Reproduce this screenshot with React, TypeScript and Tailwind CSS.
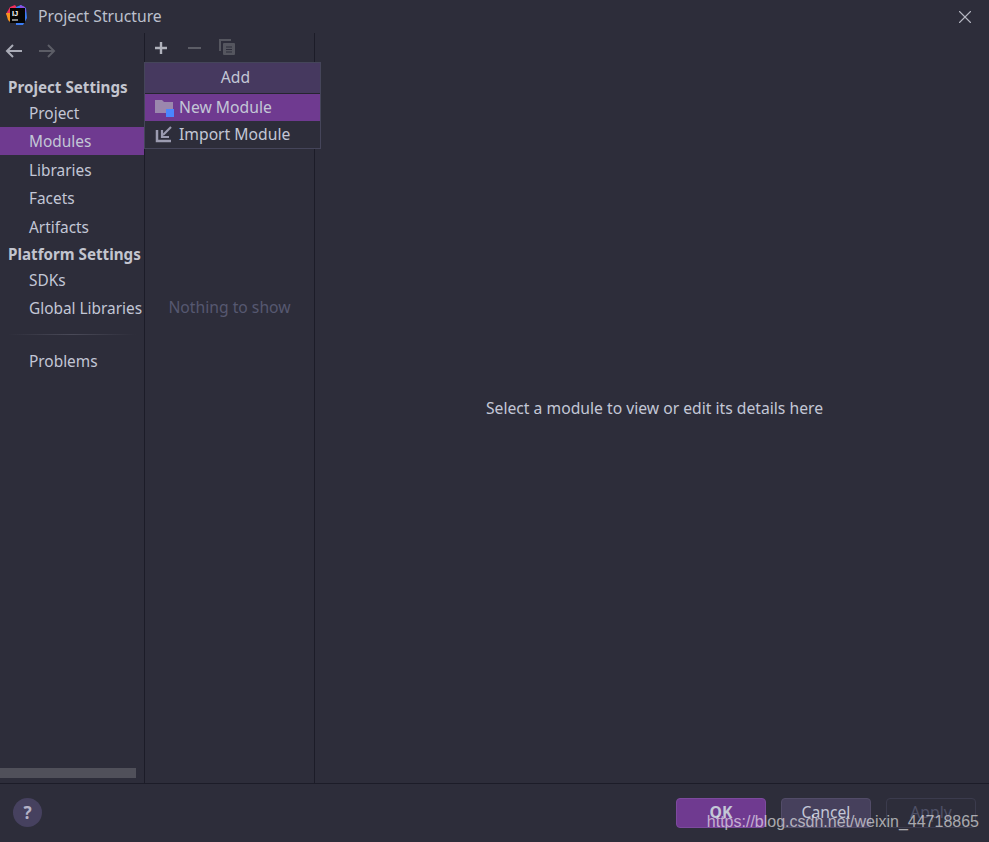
import React from 'react';
import { X } from 'lucide-react';

const ideFont = { fontFamily: '"Noto Sans", "Open Sans", sans-serif' };

const Logo = () => (
  <svg width="21" height="21" viewBox="0 0 21 21">
    <path d="M0 9 L4 2 L9 0 L12 4 L6 12 L3 14 Z" fill="#ef2f5e" />
    <path d="M0 8 L4 8 L4 17 L2 15 Z" fill="#f7941e" />
    <path d="M10 2 L15 0 L20 3 L21 13 L17 20 L10 20 Z" fill="#3a7cf5" />
    <path d="M14 0 L19 2 L20 7 L14 5 Z" fill="#8e4fe0" />
    <rect x="4" y="3" width="15" height="15" fill="#050505" />
    <text x="6" y="11" fontSize="7.5" fontWeight="700" fill="#fff" fontFamily="Liberation Sans, sans-serif">IJ</text>
    <rect x="6" y="14.5" width="6" height="1" fill="#fff" />
  </svg>
);

const SideItem = ({ label, active, h }: { label: string; active?: boolean; h: string }) => (
  <div className={`flex items-center pl-[29px] text-[15.4px] text-[#c3c7d6] whitespace-nowrap ${h} ${active ? 'bg-[#6f3a90]' : ''}`}>
    {label}
  </div>
);

const SideHeader = ({ label, h }: { label: string; h: string }) => (
  <div className={`flex items-center pl-2 text-[15.2px] font-bold text-[#c3c5cf] whitespace-nowrap ${h}`}>{label}</div>
);

const FooterButton = ({ label, cls }: { label: string; cls: string }) => (
  <button className={`w-[90px] h-[30px] pt-[1px] rounded-[4px] border text-[15.7px] ${cls}`}>{label}</button>
);

export default function App() {
  return (
    <div className="relative w-[989px] h-[842px] overflow-hidden flex flex-col bg-[#2d2d3a]" style={ideFont}>
      {/* title bar */}
      <div className="h-[33px] flex items-center shrink-0">
        <div className="ml-[6px] mr-[11px] w-[21px] h-[21px] -mt-[3px]"><Logo /></div>
        <span className="text-[15.7px] text-[#bcc0cd]">Project Structure</span>
        <X className="ml-auto mr-[13px] text-[#b5b7c2]" size={22} strokeWidth={1.2} />
      </div>

      <div className="flex h-[750px] shrink-0">
        {/* left nav */}
        <div className="w-[144px] flex flex-col relative shrink-0">
          <div className="h-[34px] flex items-center pl-[5px] pt-[2px] gap-[15px] shrink-0">
            <svg width="18" height="14" viewBox="0 0 18 14" fill="none" stroke="#a9abb6" strokeWidth="2">
              <path d="M17 7H2M8 1L2 7l6 6" />
            </svg>
            <svg width="18" height="14" viewBox="0 0 18 14" fill="none" stroke="#5c5d66" strokeWidth="2">
              <path d="M1 7h15M10 1l6 6-6 6" />
            </svg>
          </div>
          <SideHeader label="Project Settings" h="h-[26px] mt-[7px]" />
          <SideItem label="Project" h="h-[26px] pt-[2px]" />
          <SideItem label="Modules" active h="h-[28px] mt-[1px] pt-[2px]" />
          <SideItem label="Libraries" h="h-[28px] mt-[2px]" />
          <SideItem label="Facets" h="h-[28px]" />
          <SideItem label="Artifacts" h="h-[28px] mt-[1px]" />
          <SideHeader label="Platform Settings" h="h-[26px] -mt-[1px]" />
          <SideItem label="SDKs" h="h-[28px]" />
          <SideItem label="Global Libraries" h="h-[28px]" />
          <div className="mx-[8px] mt-[11px] h-px bg-gradient-to-r from-transparent via-[#4a4a58] to-transparent" />
          <SideItem label="Problems" h="h-[28px] mt-[13px]" />
          <div className="mt-auto mb-[5px] w-[136px] h-[10px] bg-[#50505a]" />
        </div>

        {/* module list */}
        <div className="w-[171px] shrink-0 border-x border-[#1c1c28] flex flex-col">
          <div className="h-[29px] flex items-center pl-[9px] gap-[19px] shrink-0">
            <svg width="14" height="14" viewBox="0 0 14 14" stroke="#b0b2bc" strokeWidth="2.4">
              <path d="M7 1v12M1 7h12" />
            </svg>
            <svg width="14" height="14" viewBox="0 0 14 14" stroke="#5c5d66" strokeWidth="2">
              <path d="M1 7h13" />
            </svg>
            <svg width="17" height="17" viewBox="0 0 17 17" fill="none" className="-ml-[1px]">
              <path d="M1 12V1h11" stroke="#55565f" strokeWidth="2" />
              <rect x="4" y="4" width="12" height="12" rx="1" fill="#55565f" />
              <path d="M7 8h6M7 10.5h6M7 13h6" stroke="#2d2d3a" strokeWidth="1" />
            </svg>
          </div>
          <div className="flex-1 flex justify-center pt-[232px] text-[15.7px] leading-[26px] text-[#565870]">
            Nothing to show
          </div>
        </div>

        {/* details */}
        <div className="flex-1 flex justify-center pl-[5px] pt-[362px] text-[15.7px] leading-[26px] text-[#c3c7d6]">
          Select a module to view or edit its details here
        </div>
      </div>

      {/* footer */}
      <div className="flex-1 border-t border-[#1c1c28] flex items-center pl-[13px] pr-[13px] pb-[1px]">
        <div className="w-[29px] h-[29px] rounded-full bg-[#46415f] flex items-center justify-center text-[17px] font-bold text-[#b5b3c7]">?</div>
        <div className="ml-auto flex gap-[15px]">
          <FooterButton label="OK" cls="bg-[#6f3a90] border-[#7d4a9e] font-bold text-[#c3c7d6]" />
          <FooterButton label="Cancel" cls="bg-[#46405c] border-[#524c68] text-[#c3c7d6]" />
          <FooterButton label="Apply" cls="border-[#3b3b4d] text-[#4f5168]" />
        </div>
      </div>

      {/* add popup */}
      <div className="absolute left-[144px] top-[62px] w-[177px] h-[87px] border border-[#45455a] bg-[#2d2d3a] flex flex-col">
        <div className="h-[31px] flex items-center justify-center pl-[6px] bg-[#46395f] border-b border-[#25252f] text-[15.7px] text-[#c3c7d6]">Add</div>
        <div className="h-[27px] flex items-center bg-[#6f3a90] text-[15.7px] text-[#c3c7d6]">
          <svg width="20" height="20" viewBox="0 0 20 20" className="ml-[10px] mr-[4px]">
            <path d="M0 2h7l2 2h9v11H0z" fill="#9b87ad" />
            <rect x="11" y="11" width="8" height="8" fill="#4a86ff" />
          </svg>
          New Module
        </div>
        <div className="h-[27px] flex items-center text-[15.7px] text-[#c3c7d6]">
          <svg width="20" height="20" viewBox="0 0 20 20" fill="none" stroke="#9b9bb0" className="ml-[10px] mr-[4px] -mt-[2px]">
            <path d="M2 6v11h14" strokeWidth="2.5" />
            <path d="M16 3L8 11" strokeWidth="2.2" />
            <path d="M7 6v7h7" strokeWidth="2.2" />
          </svg>
          Import Module
        </div>
      </div>

      {/* watermark */}
      <div className="absolute right-[10px] top-[812px] text-[16px] leading-[20px] text-white/60 whitespace-nowrap" style={{ fontFamily: '"Liberation Sans", sans-serif' }}>
        https://blog.csdn.net/weixin_44718865
      </div>
    </div>
  );
}
